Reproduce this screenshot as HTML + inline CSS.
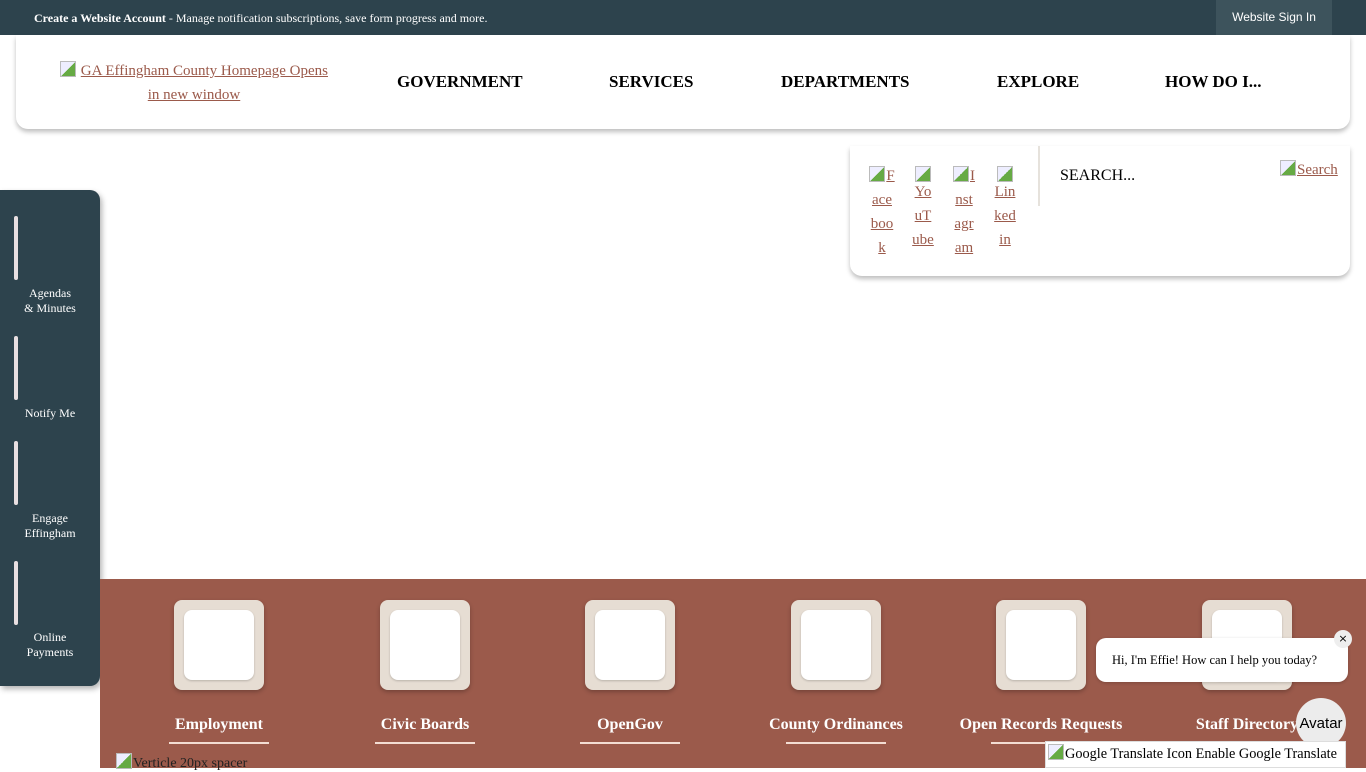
<!DOCTYPE html>
<html><head><meta charset="utf-8"><style>
*{margin:0;padding:0;box-sizing:border-box}
html,body{font-family:"Liberation Serif","Times New Roman","DejaVu Serif",serif}
body{width:1366px;height:768px;overflow:hidden;background:#fff;position:relative}
div,span,a{font-family:"Liberation Serif","Times New Roman","DejaVu Serif",serif}
a{color:#9b5a4b;text-decoration:underline}
.top{position:absolute;left:0;top:0;width:1366px;height:35px;background:#2d434d;color:#fff;font-size:12px}
.top .t{position:absolute;left:34px;top:11px;white-space:nowrap}
.top .sign{position:absolute;left:1216px;top:0;width:116px;height:35px;background:#3d535c;font-family:"Liberation Sans",sans-serif;font-size:12px;text-align:center;line-height:35px}
.hdr{position:absolute;left:16px;top:35px;width:1334px;height:94px;background:#fff;border-radius:0 0 12px 12px;box-shadow:0 3px 5px rgba(0,0,0,.25)}
.logo{position:absolute;left:48px;top:59px;width:292px;text-align:center;font-size:15px;line-height:24px}
.nav{position:absolute;top:72px;font-weight:bold;font-size:17px;color:#000;white-space:nowrap}
.soc{position:absolute;left:850px;top:146px;width:500px;height:130px;background:#fff;border-radius:0 0 12px 12px;box-shadow:0 3px 5px rgba(0,0,0,.25)}
.ic{position:absolute;top:164px;width:26px;font-size:15px;line-height:24px;text-align:center;color:#9b5a4b;text-decoration:underline}
.bi{display:inline-block;width:16px;height:16px;border:1px solid #bbb;background:linear-gradient(135deg,#eef 50%,#6a4 50%);vertical-align:-2px;margin-right:1px}
.side{position:absolute;left:0;top:190px;width:100px;height:496px;background:#2d434d;border-radius:0 10px 10px 0;box-shadow:2px 3px 6px rgba(0,0,0,.3)}
.bar{position:absolute;left:14px;width:4px;background:#e8dfe1;border-radius:2px}
.sl{position:absolute;left:0;width:100px;text-align:center;color:#fff;font-size:12px;line-height:15px}
.band{position:absolute;left:100px;top:579px;width:1266px;height:189px;background:#9b5a4b}
.tile{position:absolute;top:600px;width:90px;height:90px;background:#e6ddd3;border-radius:8px;box-shadow:0 2px 4px rgba(0,0,0,.25)}
.tile i{position:absolute;left:10px;top:10px;width:70px;height:70px;background:#fff;border-radius:8px;box-shadow:0 1px 2px rgba(0,0,0,.2)}
.lb{position:absolute;top:716px;width:200px;text-align:center;color:#fff;font-weight:bold;font-size:16px;white-space:nowrap}
.ul{position:absolute;top:742px;width:100px;height:2px;background:#f3ddd3}
</style></head><body>
<div class="top"><span class="t"><b>Create a Website Account</b> - Manage notification subscriptions, save form progress and more.</span><div class="sign">Website Sign In</div></div>
<div class="hdr"></div>
<div class="logo"><span class="bi"></span> <a>GA Effingham County Homepage Opens</a><br><a>in new window</a></div>
<div class="nav" style="left:397px">GOVERNMENT</div>
<div class="nav" style="left:609px">SERVICES</div>
<div class="nav" style="left:781px">DEPARTMENTS</div>
<div class="nav" style="left:997px">EXPLORE</div>
<div class="nav" style="left:1165px">HOW DO I...</div>
<div class="soc"><div style="position:absolute;left:188px;top:0;width:2px;height:60px;background:#e6e2dc"></div></div>
<div class="ic" style="left:869px"><span class="bi"></span>F<br>ace<br>boo<br>k</div>
<div class="ic" style="left:910px"><span class="bi"></span></div>
<div class="ic" style="left:910px;top:180px">Yo<br>uT<br>ube</div>
<div class="ic" style="left:951px"><span class="bi"></span>I<br>nst<br>agr<br>am</div>
<div class="ic" style="left:992px"><span class="bi"></span></div>
<div class="ic" style="left:992px;top:180px">Lin<br>ked<br>in</div>
<div style="position:absolute;left:1060px;top:167px;font-size:16px;white-space:nowrap">SEARCH...</div>
<div style="position:absolute;left:1280px;top:160px;font-size:15px;white-space:nowrap"><span class="bi"></span><a>Search</a></div>
<div class="side">
<div class="bar" style="top:26px;height:64px"></div><div class="sl" style="top:96px">Agendas<br>&amp; Minutes</div>
<div class="bar" style="top:146px;height:64px"></div><div class="sl" style="top:216px">Notify Me</div>
<div class="bar" style="top:251px;height:64px"></div><div class="sl" style="top:321px">Engage<br>Effingham</div>
<div class="bar" style="top:371px;height:64px"></div><div class="sl" style="top:440px">Online<br>Payments</div>
</div>
<div class="band"></div>
<div class="tile" style="left:174px"><i></i></div><div class="lb" style="left:119px">Employment</div><div class="ul" style="left:169px"></div>
<div class="tile" style="left:380px"><i></i></div><div class="lb" style="left:325px">Civic Boards</div><div class="ul" style="left:375px"></div>
<div class="tile" style="left:585px"><i></i></div><div class="lb" style="left:530px">OpenGov</div><div class="ul" style="left:580px"></div>
<div class="tile" style="left:791px"><i></i></div><div class="lb" style="left:736px">County Ordinances</div><div class="ul" style="left:786px"></div>
<div class="tile" style="left:996px"><i></i></div><div class="lb" style="left:941px">Open Records Requests</div><div class="ul" style="left:991px"></div>
<div class="tile" style="left:1202px"><i></i></div><div class="lb" style="left:1147px">Staff Directory</div>
<div style="position:absolute;left:116px;top:753px;font-size:14px;color:#222;white-space:nowrap"><span class="bi"></span>Verticle 20px spacer</div>
<div style="position:absolute;left:1096px;top:638px;width:252px;height:44px;background:#fff;border-radius:10px;font-size:12.5px;line-height:44px;padding-left:16px;white-space:nowrap;box-shadow:0 1px 3px rgba(0,0,0,.2)">Hi, I'm Effie! How can I help you today?</div>
<div style="position:absolute;left:1334px;top:630px;width:18px;height:18px;border-radius:50%;background:#eee;font-family:'DejaVu Sans',sans-serif;font-size:11px;text-align:center;line-height:18px">×</div>
<div style="position:absolute;left:1296px;top:698px;width:50px;height:50px;border-radius:50%;background:#ececec;font-family:'Liberation Sans',sans-serif;font-size:15px;line-height:52px;text-align:center;white-space:nowrap">Avatar</div>
<div style="position:absolute;left:1045px;top:741px;width:301px;height:27px;background:#fff;font-size:14.3px;line-height:24px;padding-left:2px;white-space:nowrap;overflow:hidden;border:1px solid #ddd"><span class="bi"></span>Google Translate Icon Enable Google Translate</div>
</body></html>
